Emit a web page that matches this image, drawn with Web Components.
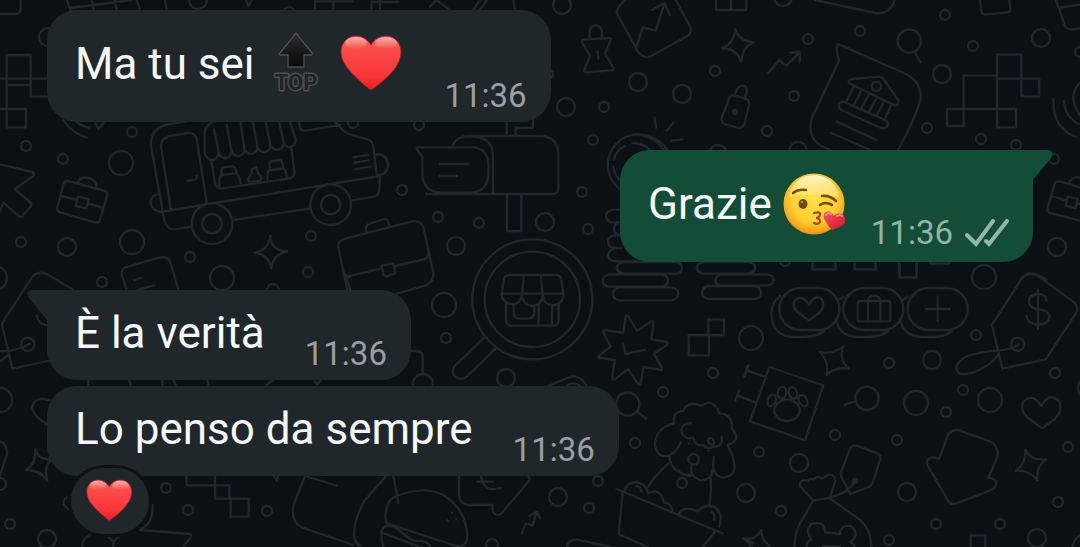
<!DOCTYPE html>
<html lang="it">
<head>
<meta charset="utf-8">
<meta name="viewport" content="width=device-width, initial-scale=1">
<title>Chat</title>
<style>
    :root {
        --chat-bg: #0b1014;
        --doodle-color: #21272b;
        --bubble-in: #20272a;
        --bubble-out: #144d37;
        --text-color: #f5f8fa;
        --time-in: #9b9fa2;
        --time-out: #93b5a6;
    }
    body {
        margin: 0;
        background: var(--chat-bg);
        color: var(--text-color);
        font-family: Roboto, "Liberation Sans", sans-serif;
    }
</style>
</head>
<body>

<chat-view>
    <chat-message>Ma tu sei <emoji-icon name="top"></emoji-icon> <emoji-icon name="heart"></emoji-icon><message-time slot="meta">11:36</message-time></chat-message>
    <chat-message direction="out" tail>Grazie <emoji-icon name="kiss"></emoji-icon><message-time slot="meta" status="sent">11:36</message-time></chat-message>
    <chat-message tail>È la verità<message-time slot="meta">11:36</message-time></chat-message>
    <chat-message grouped>Lo penso da sempre<message-time slot="meta">11:36</message-time><message-reaction slot="reaction"><emoji-icon name="heart"></emoji-icon></message-reaction></chat-message>
</chat-view>

<script>
// Small bubbles scattered over the wallpaper: x, y, radius
const DOTS = [
    [562,5,9],[638,82,9],[682,94,9],[566,107,9],[604,107,5],[715,71,5],[808,39,5],[794,96,5],[767,131,5],
    [593,140,5],[582,192,5],[545,222,9],[588,229,5],[718,154,9],[798,151,9],[783,-3,9],[945,15,5],[860,31,5],
    [973,46,5],[1041,38,9],[942,74,9],[1080,52,5],[927,128,5],[981,139,5],[1016,145,5],[1054,159,5],
    [1057,247,9],[984,277,12],[132,132,5],[26,146,5],[63,159,5],[121,163,12],[21,242,5],[67,247,9],
    [132,242,12],[190,257,5],[102,282,5],[222,278,12],[-5,278,12],[273,290,6],[353,123,5],[419,125,5],
    [402,190,5],[438,217,5],[479,223,5],[311,236,5],[308,272,5],[456,246,9],[444,305,12],[446,338,5],
    [506,378,9],[423,384,10],[713,373,5],[663,392,5],[635,443,5],[598,481,5],[558,497,9],[589,508,5],
    [492,545,6],[682,483,5],[746,493,9],[751,338,12],[976,335,5],[889,363,5],[932,360,9],[963,390,5],
    [946,412,5],[990,400,12],[916,403,12],[1055,373,5],[835,435,5],[897,440,5],[759,452,5],[799,463,9],
    [1068,447,5],[907,492,9],[781,511,5],[1058,502,5],[936,524,5],[1000,524,5],[1037,538,9],[889,540,5],
    [1090,388,12],[785,261,5],[0,400,12],[166,488,5],[188,510,5],[267,511,5],[10,524,5],[47,539,9],
    [0,484,6],[198,0,9],[48,37,9],[289,12,5],[548,74,5]
];

class ChatWallpaper extends HTMLElement {
    constructor() {
        super();
        this.attachShadow({ mode: 'open' });
    }

    connectedCallback() {
        const dots = DOTS.map(([x, y, r]) => `<circle cx="${x * 3}" cy="${y * 3}" r="${r * 3}"/>`).join('');

        // The doodles are drawn on a grid three times finer than the screen
        this.shadowRoot.innerHTML = `
            <style>
                :host { display: block; overflow: hidden; }
                svg {
                    display: block;
                    width: 100%;
                    height: 100%;
                    fill: none;
                    stroke: var(--doodle-color);
                    stroke-width: 7;
                    stroke-linecap: round;
                    stroke-linejoin: round;
                }
                .solid { fill: var(--chat-bg); }
            </style>
            <svg viewBox="0 0 3240 1641" preserveAspectRatio="xMidYMid slice" aria-hidden="true">
                ${dots}
                <!-- top edge -->
                <path d="M0 42H48Q62 40 62 26V0M200 0L212 30M275 0L282 30M345 0L350 30M210 24L395 0M410 0L420 30M495 0L500 30M738 0L746 18L755 0M945 0V30M1000 0V30M945 4H1060M1115 0V30M1140 0V30M1115 6H1195M1310 0L1350 30M1290 20L1320 -10M1420 30L1440 0M1440 30L1460 0M1540 0L1545 30"/>
                <!-- squares, left edge -->
                <path d="M20 165H92V255H20ZM0 236H152V290H92V236M0 327H78V382H20V255"/>
                <path d="M190 360Q215 400 260 412M225 360Q240 378 268 383M285 368L295 387L312 368"/>
                <!-- weight, chart, star, padlock, coin -->
                <g transform="translate(1620 0)">
                    <path d="M149 117V96Q152 76 168 76Q184 78 186 96V114M126 126Q124 120 132 119L208 114Q215 114 212 121L195 162L220 203Q222 210 215 211L138 217Q131 216 133 209L150 167ZM173 155L175 176"/>
                    <path d="M287 148L308 82L347 92L373 10M336 30L373 9L389 46M262 -10L236 22Q226 32 233 45L292 151Q306 176 330 170L442 108Q458 97 450 80L405 -6M528 0V30H619V0M573 0V30"/>
                    <path d="M586 86Q593 122 643 127Q608 137 604 185Q590 146 546 144Q582 132 586 86Z"/>
                    <path d="M685 218L718 180L738 197L779 157M751 158L779 156V185"/>
                    <path d="M583 290L590 269Q601 252 615 259Q623 267 619 280L613 298M569 291Q573 284 582 286L615 295Q630 300 627 314L613 372Q606 388 594 383L558 374Q542 368 545 354Z"/>
                    <circle cx="585" cy="336" r="6" fill="var(--doodle-color)"/>
                    <path d="M344 352L348 383M400 368L380 392M395 422L427 418M246 572A92 92 0 0 1 286 403Q350 403 382 450M300 404Q345 412 372 450M221 480Q228 450 255 438M277 430Q305 427 328 448M220 500Q223 525 240 540"/>
                    <path d="M246 629H218Q198 632 198 648Q200 666 218 667H246M232 668Q218 676 224 695Q230 706 246 706M246 706H222Q204 710 204 725Q206 743 222 744H246M222 746Q206 750 204 766Q208 784 226 784H300"/>
                </g>
                <!-- bank card, pixels, satchel -->
                <g transform="translate(2400 0)">
                    <path d="M45 0L226 39Q270 45 284 0M540 0L544 34Q546 44 556 43L622 38Q632 36 631 26L628 0M768 0L795 78Q802 90 818 88L840 86M782 22L840 14"/>
                    <circle cx="328" cy="123" r="35"/><path d="M345 158L362 187"/>
                    <path d="M117 183Q106 144 113 134Q118 132 125 137L318 222Q370 250 360 304Q340 370 294 450M117 183L37 350Q18 408 63 438L90 450"/>
                    <path d="M146 249Q146 240 156 237L236 230Q246 230 250 236L296 302Q298 314 286 317ZM160 262L140 303M184 271L163 313M207 282L185 322M231 292L209 332M253 303L232 342M275 313L256 352M130 305L258 361Q268 370 260 381Q254 388 243 384L124 330Q113 322 118 311Q122 304 130 305ZM110 365L230 420M94 399L210 450"/>
                    <circle cx="229" cy="259" r="14"/>
                    <path d="M491 227H591V327H491ZM591 164H664V236H591ZM664 236H718V289H664ZM441 327H491V378H441ZM591 327H648V382H591Z"/>
                    <path d="M840 248Q800 290 840 345M792 303Q796 355 840 374M760 297Q758 388 830 411"/>
                    <path d="M765 548Q770 542 782 545L840 562M765 548L742 625Q740 635 750 639L840 662M754 588L800 602M832 610L840 612M803 590L833 596L827 624L797 618ZM805 550Q818 528 840 533M38 780V808H106V780M164 780V808H227V780M299 780V832H350V780M390 780V790H448V780M660 840Q690 805 740 840"/>
                </g>
                <!-- arrow, briefcase, price tag, food truck -->
                <g transform="translate(0 330)">
                    <path d="M0 163L97 186Q106 192 97 200L44 237L93 279Q96 284 92 290L66 319Q60 323 54 317L10 277L0 305"/>
                    <path d="M204 213L316 243Q323 247 322 254L299 332Q295 340 286 337L180 307Q170 303 171 294L191 220Q195 212 204 213ZM183 258L230 270M264 280L306 293M233 260L267 267L259 295L227 288ZM234 219Q238 200 262 203Q293 210 289 236"/>
                    <path d="M220 540L145 494Q115 480 98 500L14 627Q4 640 8 652L37 776L150 752M0 723Q50 725 88 702M0 755L25 735"/>
                    <circle cx="83" cy="703" r="20"/><path d="M110 617Q115 645 145 646"/>
                    <path d="M380 540L365 493Q364 478 376 472L478 443Q505 437 512 460L535 540M402 511L422 504M412 540L463 526"/>
                    <path d="M811 377Q812 420 862 425Q820 432 814 474Q806 432 764 428Q806 421 811 377Z"/>
                    <!-- truck body -->
                    <path d="M488 303L453 108Q450 52 510 42L560 34M488 303Q494 360 524 358L574 350M512 296L483 110Q482 88 505 79L560 69Q584 65 590 88L620 276M480 306L1140 198M563 212L585 209Q592 206 590 198M484 305Q452 302 452 275Q454 255 472 253"/>
                    <path d="M640 35Q612 48 614 75V130Q622 152 640 150Q655 145 656 125Q658 144 677 144Q695 140 694 120Q698 138 716 138Q735 134 733 116Q738 132 756 131Q773 128 772 110Q778 128 796 126Q813 120 811 104Q818 122 835 119Q852 113 851 98Q856 113 872 111Q890 104 886 86L870 34M642 58L656 125M680 45L694 120M722 38L733 116M759 38L772 110M798 38L811 104M838 38L851 98M634 152L645 220Q650 237 668 235L870 205Q885 200 883 185L874 115M895 35L900 52Q903 64 915 62L1020 45M1004 34L1030 62Q1050 78 1095 85Q1118 90 1120 110L1130 195M1140 198L1138 240Q1136 256 1122 260L1055 272M700 330L928 296"/>
                    <path d="M658 230V208Q660 195 672 194L705 190Q718 190 722 220M664 193V180Q666 172 676 171L698 169Q707 170 710 190M746 215Q742 203 755 192V178L768 170L774 190Q788 200 782 212ZM802 207Q800 182 812 180L850 176Q858 178 860 202M810 178Q805 155 815 153L838 150Q848 150 850 174"/>
                    <path d="M1060 142L1104 135M1062 158L1106 151M1066 178L1112 170M1126 133Q1160 130 1165 165Q1160 195 1134 196"/>
                    <circle class="solid" cx="636" cy="341" r="61"/><circle cx="636" cy="341" r="29"/>
                    <circle class="solid" cx="992" cy="284" r="61"/><circle cx="992" cy="284" r="29"/>
                </g>
                <!-- mailbox, portfolio, shop under the lens -->
                <g transform="translate(810 330)">
                    <path d="M549 105Q560 78 600 78H815Q865 82 865 135V235Q865 252 848 252H468M600 78Q668 80 669 135V250M440 112H610Q655 116 655 165V190Q655 246 600 248H510Q458 245 457 190V140L440 118ZM510 162H595M510 198H560M711 255V363H754V255M710 76V34M737 76V54H789V28"/>
                    <path d="M232 540L205 410Q204 394 222 387L425 335Q452 330 460 350L490 490Q492 515 465 527L380 551M241 540L230 500L335 475M375 468L465 447Q478 440 475 430M288 365V352Q290 343 300 341L342 327Q354 326 358 345M335 467L366 460Q372 460 375 490L350 500L340 494ZM218 480Q225 500 240 502"/>
                    <circle cx="787" cy="568" r="180"/><circle cx="787" cy="568" r="143"/>
                    <path d="M646 680L556 766Q538 790 560 803Q578 812 594 796L680 713"/>
                    <path d="M718 495H858Q872 495 874 508L880 551Q880 584 848 586Q820 584 818 556Q815 586 787 588Q759 586 756 556Q750 584 725 582Q696 578 695 551L702 508Q704 495 718 495ZM697 551H878M761 495L757 551M813 495L817 551M708 582V630Q708 647 725 647H850Q866 647 866 630V582M731 587V610Q732 626 748 626H775Q793 624 793 606V588M806 585V645M846 588V645"/>
                    <path d="M420 723H440Q458 724 458 742V790M835 828L895 802Q930 790 950 828M890 828Q910 812 930 828"/>
                </g>
                <!-- coins, star, poodle, cart, burger -->
                <g transform="translate(1200 780)">
                    <path d="M672 6H828Q846 10 846 24Q844 40 828 41H672Q652 38 650 24Q652 8 672 6ZM628 43H785Q804 46 804 62Q802 78 785 80H628Q608 78 608 62Q610 46 628 43ZM658 82H815Q835 86 835 101Q832 120 815 121H658Q640 118 639 101Q642 84 658 82Z"/>
                    <path d="M910 6H1045Q1065 8 1066 24Q1064 38 1045 41H910Q892 38 890 24Q892 8 910 6ZM965 43H1100Q1121 46 1121 60Q1120 74 1100 77H965Q946 76 946 60Q948 46 965 43ZM925 78H1065Q1083 82 1083 98Q1082 114 1065 117H925Q908 114 906 98Q908 80 925 78Z"/>
                    <path d="M683 167L711 212L755 184Q762 182 760 192L754 238L800 246Q806 250 800 255L762 281L787 325Q788 332 780 329L731 321L722 370Q718 378 713 370L684 327L643 359Q636 360 637 352L644 300L597 293Q592 290 598 286L632 260L609 216Q609 210 617 211L670 218L677 169Q680 163 683 167ZM669 253L677 282L735 269"/>
                    <path d="M866 225H927V286H866ZM925 178H972V225H925ZM1033 350L1043 316M1006 422L1018 391M1012 406L1050 420"/>
                    <circle cx="683" cy="432" r="35"/><path d="M712 455L739 477"/>
                    <path d="M823 490Q815 456 850 452Q866 420 902 438Q940 412 958 460Q1000 462 995 505Q1028 540 982 555M823 490Q770 500 764 555Q775 600 810 585Q830 575 842 548M808 588Q812 640 874 648M876 614Q865 650 905 662Q938 655 938 630M942 590Q930 645 968 653Q1006 650 1003 615Q1000 585 982 555M873 489Q840 490 845 520Q860 540 880 532Q885 560 910 555Q920 570 940 560Q970 560 965 530M940 555Q920 550 926 536Q940 528 942 548M835 632Q850 650 874 643"/>
                    <circle cx="881" cy="598" r="16"/><path d="M866 550V551M925 572V573M806 610Q765 645 742 684M932 655Q935 700 927 738"/>
                    <path d="M650 687L967 820M668 698L656 822L760 870M945 815L900 870M673 695Q680 665 712 666Q740 675 745 700Q780 680 792 728Q812 728 818 753M836 762Q850 735 893 754Q915 730 945 742Q970 760 958 800M708 678Q722 678 724 694M935 755Q948 765 942 780M500 870Q500 840 530 838L650 865M1030 835L1060 850"/>
                    <path d="M177 648V705Q180 735 210 735H278V752Q285 770 303 762L388 662Q390 654 384 648M232 665H278M242 645Q250 700 302 684M366 820L377 790L397 797L410 756M388 768L411 755L420 775"/>
                    <path d="M-36 732Q-30 715 0 704Q80 678 130 705Q200 750 202 830Q200 862 170 858L-40 790Q-50 770 -36 732ZM156 758V759M143 781V782M169 776V777M-48 870Q-65 810 -45 800Q-20 790 10 822Q40 848 62 842Q85 845 92 862M-48 820L85 870M-5 728L-20 648M-42 648L-105 720Q-140 780 -138 830Q-130 860 -100 870"/>
                </g>
                <!-- currency pills, price tag, paw sign -->
                <g transform="translate(2220 780)">
                    <rect x="118" y="84" width="180" height="126" rx="63"/><rect x="310" y="84" width="180" height="126" rx="63"/><rect x="503" y="84" width="180" height="126" rx="63"/>
                    <path d="M120 108Q92 130 94 165Q98 226 155 231H190Q230 230 252 213M310 110L300 118M290 188Q305 230 350 231H384Q422 230 444 213M503 110L490 120M482 188Q498 230 545 231H580Q615 230 636 213"/>
                    <path d="M207 181L172 156Q155 138 165 120Q184 102 207 134Q226 100 246 118Q256 140 240 156ZM593 110V184M557 147H630"/>
                    <rect x="353" y="123" width="98" height="61" rx="8"/><path d="M384 184V122Q385 108 402 107Q420 108 421 122V184"/>
                    <path d="M218 6V28H286V6M344 6V28H407V6M477 6V52H530V6M570 6V11H628V6"/>
                    <path d="M917 298L1008 160Q1018 138 998 124L892 46Q865 30 848 52L756 194L787 326ZM920 122Q918 102 893 102Q866 104 866 126Q870 144 893 148Q930 150 928 172Q922 194 893 194Q862 192 860 168M894 90V207M835 253Q815 268 775 272Q690 278 662 300Q640 325 658 340Q690 350 738 318Q762 305 775 282"/>
                    <circle cx="833" cy="253" r="20"/>
                    <path d="M88 321L250 376L195 541L30 484ZM20 332L75 350M26 316L14 348M0 410L44 427"/>
                    <ellipse cx="141" cy="451" rx="38" ry="32"/><ellipse cx="95" cy="421" rx="12" ry="18" transform="rotate(20 95 421)"/><ellipse cx="126" cy="398" rx="13" ry="18" transform="rotate(10 126 398)"/><ellipse cx="159" cy="399" rx="12" ry="18" transform="rotate(-18 159 399)"/><ellipse cx="189" cy="422" rx="12" ry="18" transform="rotate(-28 189 422)"/>
                    <path d="M240 276Q275 286 309 260Q296 300 326 326Q285 320 260 345Q268 305 240 276ZM856 570Q872 604 919 598Q887 618 892 660Q868 630 828 632Q858 612 856 570ZM64 810Q62 840 92 860M64 810Q50 840 15 836L36 862"/>
                    <circle cx="381" cy="415" r="35"/><path d="M314 434L344 425"/>
                    <path d="M906 505L864 474Q838 450 850 424Q878 398 904 438Q928 394 958 424Q970 452 944 478Z"/>
                    <path d="M597 597L622 530Q632 506 658 511L750 544Q778 560 772 590L745 653Q772 656 768 675Q766 684 758 688L650 730Q632 736 624 722L565 620Q556 604 566 597Q578 588 597 597Z"/>
                    <path d="M331 702L304 650Q300 642 304 634L330 566Q338 553 350 557L412 580Q424 586 420 600L398 668Q394 678 384 682ZM346 662Q320 704 268 712M220 722L270 713L286 662Q284 642 264 644Q254 650 246 656Q234 645 222 658Q208 654 202 662Q178 655 180 678ZM220 722L180 790Q160 830 164 870M268 714L360 780Q396 810 394 870"/>
                    <path d="M202 870Q194 845 215 838Q192 812 215 792Q252 780 256 817L300 822Q302 794 332 798Q362 822 332 846Q350 860 344 870M248 858L300 860M692 861V826H736V861M997 861Q1003 835 1020 826"/>
                    <circle cx="346" cy="662" r="6"/>
                </g>
                <!-- lower left corner -->
                <g transform="translate(0 1110)">
                    <path d="M145 165Q100 140 96 112Q105 75 150 92M0 213Q20 220 22 250L0 318M106 238Q115 270 155 268Q130 290 142 332Q120 300 78 300Q108 285 106 238ZM203 380Q178 398 205 417M265 32V46M388 32L392 46M487 32V46M522 32L527 46M623 32L626 46M820 28L800 46M944 32L952 44L960 32M560 318V346H645V318M645 346H688V386H645ZM692 386H746V440H692ZM822 318L830 332L834 318"/>
                    <path d="M915 318L882 402Q868 450 905 472L1060 525M915 318L1010 347M458 405Q460 460 420 480L570 492Q578 496 570 504L550 530M246 530Q250 500 275 492M325 500L340 515L355 500M340 515V530"/>
                </g>
            </svg>
        `;
    }
}

class EmojiIcon extends HTMLElement {
    constructor() {
        super();
        this.attachShadow({ mode: 'open' });
    }

    connectedCallback() {
        this.shadowRoot.innerHTML = `
            <style>
                :host {
                    display: inline-block;
                    width: var(--emoji-size, 64px);
                    height: var(--emoji-size, 64px);
                    vertical-align: -17px;
                    line-height: 0;
                }
                svg { display: block; width: 100%; height: 100%; }
                text { font: bold 22px Roboto, "Liberation Sans", sans-serif; }
            </style>
            ${this.art(this.getAttribute('name'))}
        `;
    }

    art(name) {
        if (name === 'top') {
            return `
                <svg viewBox="0 0 64 64" role="img">
                    <defs><linearGradient id="a" x2="0" y2="1"><stop stop-color="#2c2d2e"/><stop offset="1" stop-color="#070707"/></linearGradient></defs>
                    <path d="M31 1L47 21Q48 23 45 23H39V35H23V23H16Q13 23 15 21Z" fill="url(#a)" stroke="#4c4f51" stroke-width="1.4" stroke-linejoin="round"/>
                    <text x="31" y="58" text-anchor="middle" fill="#202223" stroke="#4c5052" stroke-width="3" stroke-linejoin="round" paint-order="stroke">TOP</text>
                </svg>`;
        }
        if (name === 'heart') {
            return `
                <svg viewBox="0 0 64 64" role="img">
                    <defs>
                        <linearGradient id="h" x2="0" y2="1"><stop stop-color="#f9605b"/><stop offset=".3" stop-color="#fb4a48"/><stop offset=".75" stop-color="#f93536"/><stop offset="1" stop-color="#e01e22"/></linearGradient>
                        <linearGradient id="s" x2="0" y2="1"><stop stop-color="#fff" stop-opacity=".5"/><stop offset="1" stop-color="#fff" stop-opacity="0"/></linearGradient>
                    </defs>
                    <path d="M31 13C27 6 21 4 16 4C7 4 1 11 1 20C1 33 15 45 29 57Q31 58.500 33 57C49 45 61 33 61 20C61 11 55 4 46 4C41 4 35 6 31 13Z" fill="url(#h)" stroke="#a01c20" stroke-width=".8"/>
                    <ellipse cx="16" cy="11" rx="11" ry="6" fill="url(#s)"/>
                    <ellipse cx="46" cy="11" rx="11" ry="6" fill="url(#s)"/>
                </svg>`;
        }
        return `
            <svg viewBox="0 0 64 64" role="img">
                <defs>
                    <radialGradient id="f" cx=".5" cy=".42" r=".58"><stop stop-color="#ffe14a"/><stop offset=".65" stop-color="#fdd02f"/><stop offset=".9" stop-color="#f9a61c"/><stop offset="1" stop-color="#ee8a12"/></radialGradient>
                    <linearGradient id="g" x2="0" y2="1"><stop stop-color="#fff" stop-opacity=".75"/><stop offset="1" stop-color="#fff6b0" stop-opacity=".35"/></linearGradient>
                    <linearGradient id="k" x2="1" y2="1"><stop stop-color="#f4525c"/><stop offset="1" stop-color="#cf1829"/></linearGradient>
                </defs>
                <circle cx="31" cy="32" r="30.500" fill="url(#f)"/>
                <path d="M6 25Q10 4 31 3Q52 4 56 25Q31 20 6 25Z" fill="url(#g)"/>
                <g fill="none" stroke="#7a4a12" stroke-width="2.600" stroke-linecap="round">
                    <path d="M10 21Q15 17 23 18M39 24Q47 23 53 29"/>
                    <path d="M37 33Q42 29 49 33"/>
                    <path d="M31 41Q38 39 37 43Q36 46 33 46Q38 47 37 50Q35 53 31 51" stroke="#b0431a" stroke-width="2.200"/>
                </g>
                <ellipse cx="20" cy="32" rx="4.500" ry="5" fill="#6b4b12"/>
                <circle cx="19" cy="30" r="1.300" fill="#a88a4a"/>
                <path d="M51 44C46 35 36 41 43 50Q46 55 49 58C54 56 60 55 62 50C64 42 55 39 51 44Z" fill="url(#k)"/>
                <path d="M43 43Q45 40 48 42M54 44Q57 42 59 44" fill="none" stroke="#fff" stroke-opacity=".4" stroke-width="2" stroke-linecap="round"/>
            </svg>`;
    }
}

class MessageTime extends HTMLElement {
    constructor() {
        super();
        this.attachShadow({ mode: 'open' });
    }

    connectedCallback() {
        const sent = this.getAttribute('status') === 'sent';
        const ticks = sent
            ? `<svg viewBox="0 0 44 28" aria-hidden="true"><path d="M2 16L11 25L28 2M21 22L24 25L42 2"/></svg>`
            : '';

        this.shadowRoot.innerHTML = `
            <style>
                :host {
                    display: flex;
                    align-items: center;
                    gap: 12px;
                    margin-bottom: 6px;
                    color: var(--time-in);
                    font-size: 33px;
                    line-height: 40px;
                }
                :host([status]) {
                    margin-bottom: 9px;
                    color: var(--time-out);
                }
                svg {
                    width: 44px;
                    height: 28px;
                    fill: none;
                    stroke: currentColor;
                    stroke-width: 4;
                    stroke-linecap: round;
                    stroke-linejoin: miter;
                }
            </style>
            <time><slot></slot></time>${ticks}
        `;
    }
}

class MessageReaction extends HTMLElement {
    constructor() {
        super();
        this.attachShadow({ mode: 'open' });
    }

    connectedCallback() {
        this.shadowRoot.innerHTML = `
            <style>
                :host { display: block; --emoji-size: 48px; }
                button {
                    display: flex;
                    align-items: center;
                    justify-content: center;
                    box-sizing: content-box;
                    width: 78px;
                    height: 66px;
                    padding: 0;
                    border: 3px solid var(--chat-bg);
                    border-radius: 36px;
                    background: var(--bubble-in);
                }
            </style>
            <button type="button" aria-label="Reazione"><slot></slot></button>
        `;
    }
}

class ChatMessage extends HTMLElement {
    constructor() {
        super();
        this.attachShadow({ mode: 'open' });
    }

    connectedCallback() {
        const tail = this.hasAttribute('tail')
            ? `<svg class="tail" viewBox="0 0 20 30" aria-hidden="true"><path d="M0 0H15Q22 1 18 8L0 30Z"/></svg>`
            : '';

        this.shadowRoot.innerHTML = `
            <style>
                :host {
                    --bubble: var(--bubble-in);
                    display: flex;
                    margin-top: 28px;
                }
                :host(:first-child) { margin-top: 0; }
                :host([grouped]) { margin-top: 6px; }
                :host([direction="out"]) {
                    --bubble: var(--bubble-out);
                    justify-content: flex-end;
                }
                .bubble {
                    position: relative;
                    display: flex;
                    align-items: flex-end;
                    gap: 40px;
                    padding: 0 24px 0 28px;
                    border-radius: 30px;
                    background: var(--bubble);
                }
                .text {
                    padding: 17px 0 21px;
                    font-size: 44px;
                    line-height: 52px;
                }
                .text.with-emoji { line-height: 74px; }
                :host([direction="out"]) .bubble { gap: 24px; }
                :host([tail]) .bubble { border-top-left-radius: 0; }
                :host([tail][direction="out"]) .bubble {
                    border-top-left-radius: 30px;
                    border-top-right-radius: 0;
                }
                .tail {
                    position: absolute;
                    top: 0;
                    right: 100%;
                    width: 20px;
                    height: 30px;
                    fill: var(--bubble);
                    transform: scaleX(-1);
                }
                :host([direction="out"]) .tail {
                    right: auto;
                    left: 100%;
                    transform: none;
                }
                ::slotted([slot="reaction"]) {
                    position: absolute;
                    left: 21px;
                    bottom: -61px;
                }
            </style>
            <div class="bubble">
                ${tail}
                <div class="text"><slot></slot></div>
                <slot name="meta"></slot>
                <slot name="reaction"></slot>
            </div>
        `;

        // Lines that hold an emoji are taller than plain text
        if (this.querySelector(':scope > emoji-icon')) {
            this.shadowRoot.querySelector('.text').classList.add('with-emoji');
        }
    }
}

class ChatView extends HTMLElement {
    constructor() {
        super();
        this.attachShadow({ mode: 'open' });
    }

    connectedCallback() {
        this.shadowRoot.innerHTML = `
            <style>
                :host {
                    position: relative;
                    display: block;
                    min-height: 100vh;
                    overflow: hidden;
                }
                chat-wallpaper { position: absolute; inset: 0; }
                main {
                    position: relative;
                    padding: 10px 47px 64px;
                }
            </style>
            <chat-wallpaper></chat-wallpaper>
            <main><slot></slot></main>
        `;
    }
}

customElements.define('chat-wallpaper', ChatWallpaper);
customElements.define('emoji-icon', EmojiIcon);
customElements.define('message-time', MessageTime);
customElements.define('message-reaction', MessageReaction);
customElements.define('chat-message', ChatMessage);
customElements.define('chat-view', ChatView);
</script>
</body>
</html>
